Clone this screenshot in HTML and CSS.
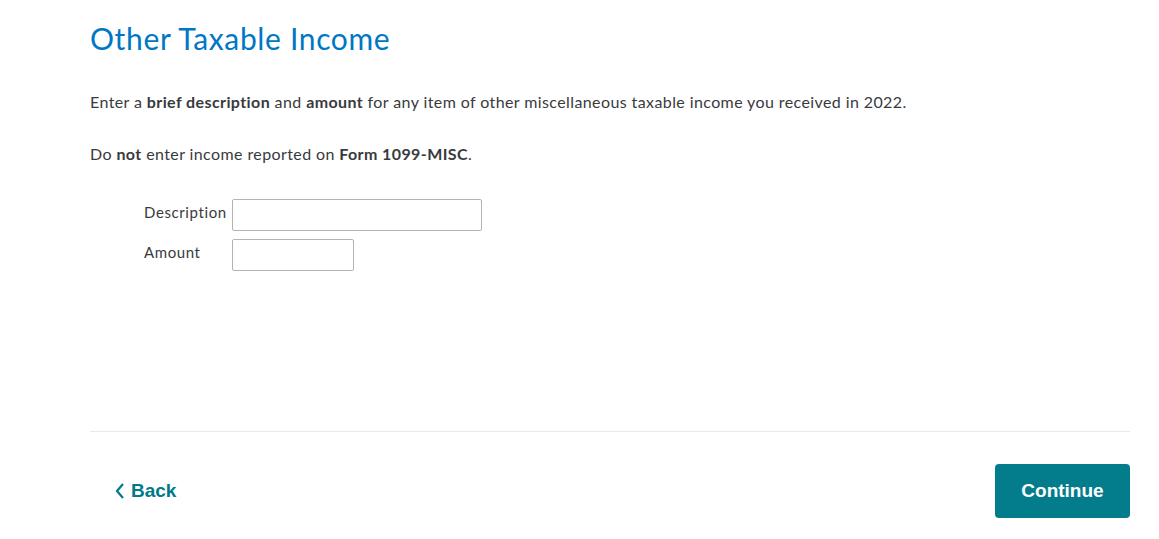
FILE: index.html
```html
<!DOCTYPE html>
<html lang="en">
<head>
    <meta charset="UTF-8">
    <meta name="viewport" content="width=device-width, initial-scale=1.0">
    <title>Other Taxable Income</title>
    <link rel="stylesheet" href="styles.css">
</head>
<body>
    <div class="page">
        <h1>Other Taxable Income</h1>
        <p>Enter a <b>brief description</b> and <b>amount</b> for any item of other miscellaneous taxable income you received in 2022.</p>
        <p>Do <b>not</b> enter income reported on <b>Form 1099-MISC</b>.</p>

        <div class="form">
            <div class="row">
                <label for="desc">Description</label>
                <input type="text" id="desc" class="wide" />
            </div>
            <div class="row">
                <label for="amount">Amount</label>
                <input type="text" id="amount" class="short" />
            </div>
        </div>

        <div class="footer">
            <a href="#" class="back">
                <svg width="12" height="18" viewBox="0 0 12 18"><path d="M9 2 L3 9 L9 16" fill="none" stroke="currentColor" stroke-width="2.2"/></svg>
                Back
            </a>
            <button class="continue">Continue</button>
        </div>
    </div>
</body>
</html>
```

FILE: styles.css
```css
body {
    margin: 0;
    font-family: Lato, "Noto Sans", sans-serif;
    color: #393a3d;
    background-color: #fff;
}

.page {
    padding: 18px 29px 0 90px;
}

h1 {
    margin: 0 0 33px;
    font-size: 30px;
    font-weight: 400;
    color: #0077c5;
    letter-spacing: 0.65px;
    line-height: 40px;
}

p {
    margin: 0 0 30px;
    font-size: 16px;
    line-height: 22px;
    letter-spacing: 0.4px;
}

b {
    font-weight: 700;
}

.form {
    margin: 34px 0 0 54px;
}

.row {
    display: flex;
    align-items: flex-start;
    margin-bottom: 8px;
}

label {
    width: 88px;
    font-size: 15px;
    line-height: 26px;
    letter-spacing: 0.6px;
}

input {
    height: 32px;
    box-sizing: border-box;
    border: 1px solid #b3b3b3;
    border-radius: 2px;
    padding: 4px 8px;
    font-family: inherit;
    font-size: 15px;
}

.wide {
    width: 250px;
}

.short {
    width: 122px;
}

.footer {
    margin-top: 160px;
    border-top: 1px solid #e9e9e9;
    padding-top: 32px;
    display: flex;
    justify-content: space-between;
    align-items: center;
}

.back {
    display: flex;
    align-items: center;
    gap: 5px;
    margin-left: 24px;
    color: #00798a;
    text-decoration: none;
    font-family: "Liberation Sans", Arial, sans-serif;
    font-weight: 700;
    font-size: 19px;
}

.continue {
    width: 135px;
    height: 54px;
    background-color: #037c8c;
    color: #fff;
    border: none;
    border-radius: 4px;
    font-family: "Liberation Sans", Arial, sans-serif;
    font-weight: 700;
    font-size: 19px;
    cursor: pointer;
}
```
